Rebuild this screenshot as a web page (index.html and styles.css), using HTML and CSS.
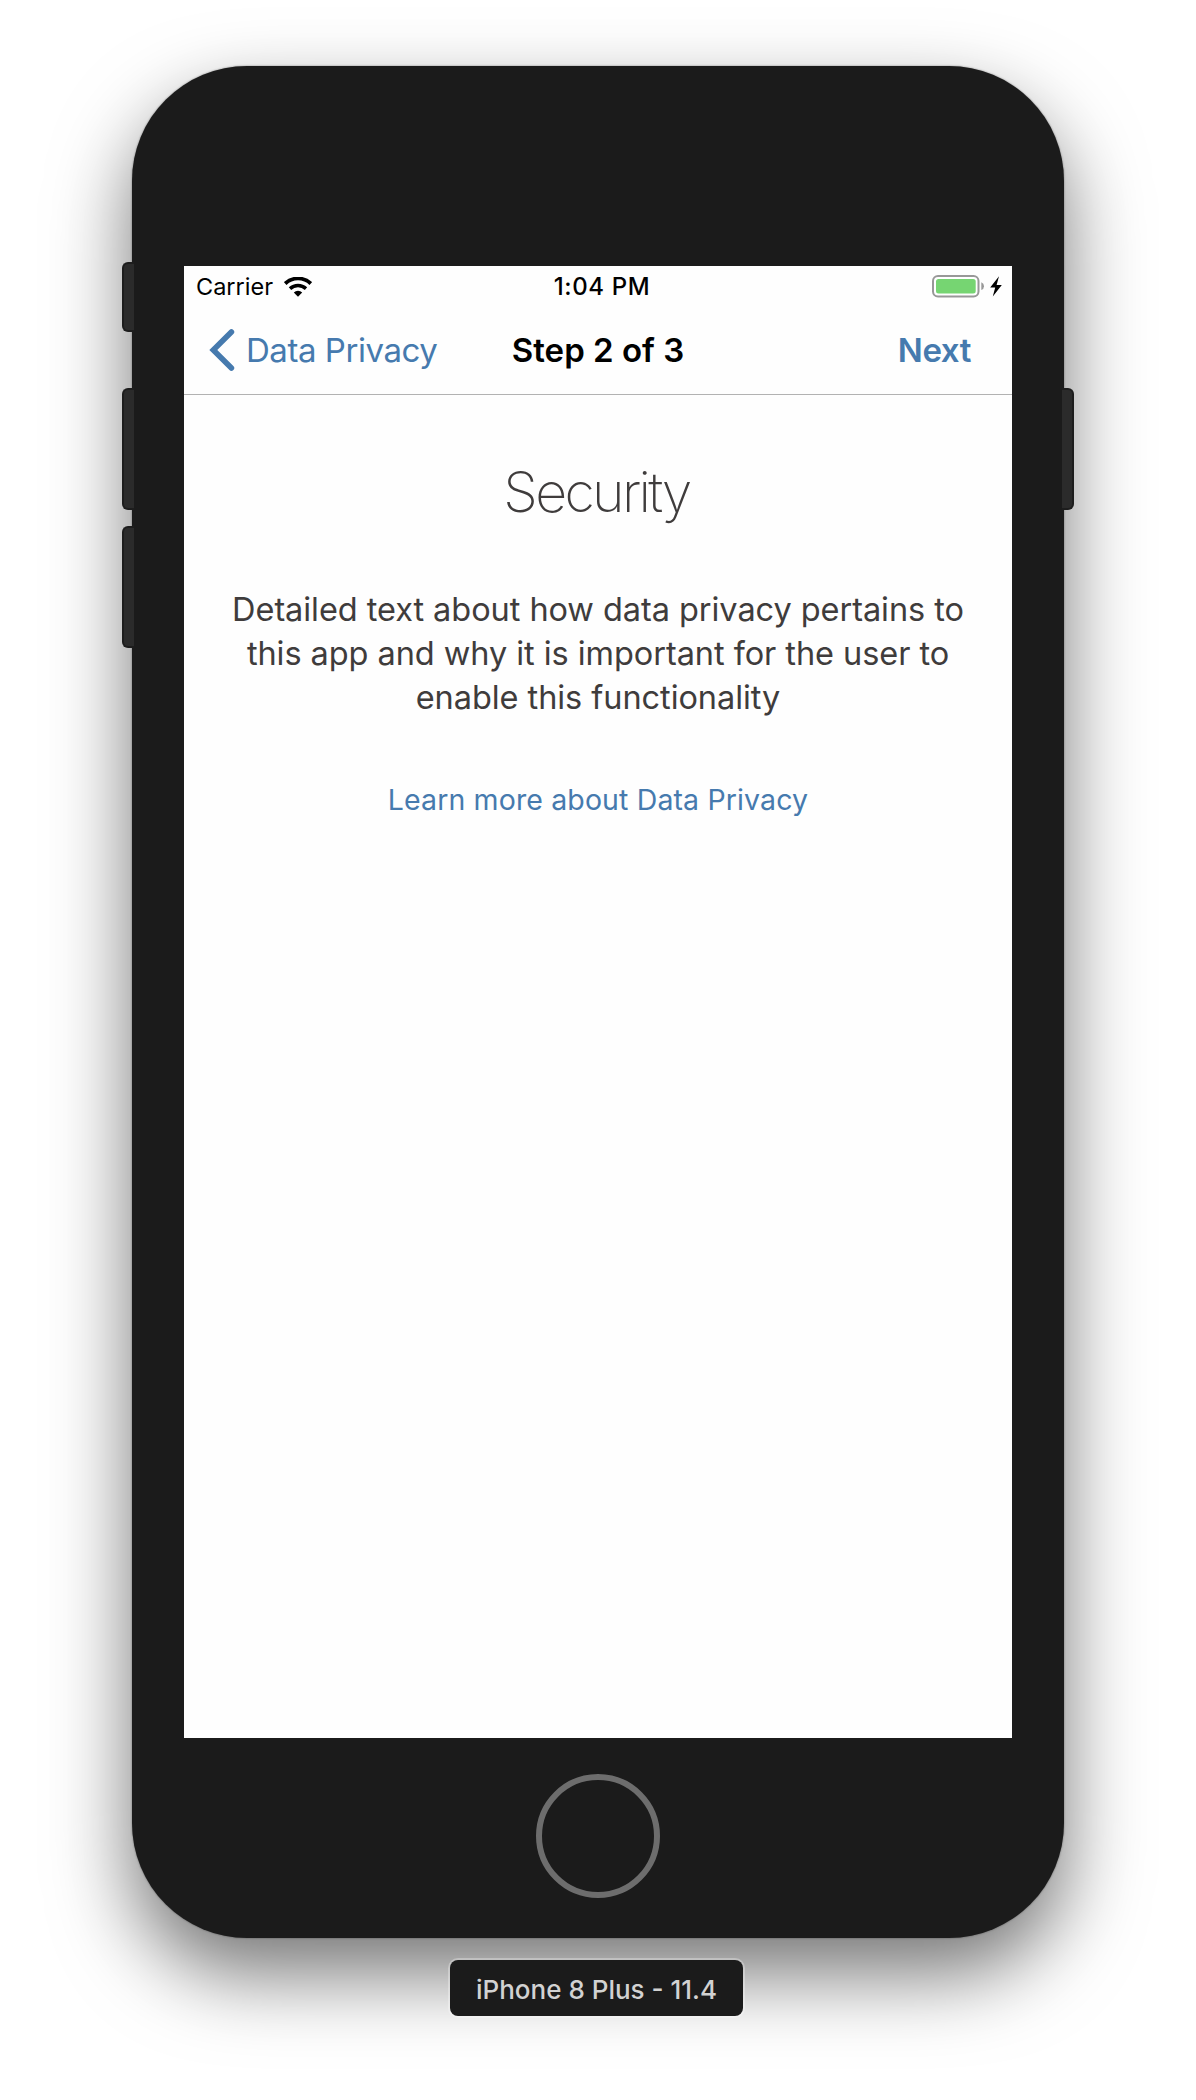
FILE: index.html
```html
<!DOCTYPE html>
<html lang="en">
<head>
<meta charset="utf-8">
<title>Security</title>
<link rel="stylesheet" href="styles.css">
</head>
<body>
<div class="phone">
  <span class="key key-mute"></span>
  <span class="key key-up"></span>
  <span class="key key-down"></span>
  <span class="key key-power"></span>
  <main class="screen">
    <div class="status">
      <div class="status-left"><span class="carrier">Carrier</span><svg class="wifi" width="28" height="20" viewBox="0 0 28 20"><path d="M1.2 6.6A18.5 18.5 0 0 1 26.8 6.6" fill="none" stroke="#000" stroke-width="3.8"/><path d="M6 11.6A11.8 11.8 0 0 1 22 11.6" fill="none" stroke="#000" stroke-width="3.5"/><path d="M9.8 15.4A6 6 0 0 1 18.2 15.4L14 19.8Z"/></svg></div>
      <span class="time">1:04 PM</span>
      <div class="status-right"><svg width="71" height="24" viewBox="0 0 71 24"><rect x="1" y="2" width="45.5" height="20.5" rx="5" fill="#fff" stroke="#989898" stroke-width="2"/><rect x="4" y="5" width="39.7" height="14.6" rx="2.5" fill="#76d572"/><path d="M49.3 8.3Q52 9.5 52 12.2T49.3 16.1Z" fill="#989898"/><path d="M67 2.3L58.2 13.6H63.2L60.8 22.6L69.8 11H64.6Z"/></svg></div>
    </div>
    <nav class="nav">
      <a class="back"><svg width="26" height="44" viewBox="0 0 26 44"><path d="M22.4 4L4.3 22L22.4 40" fill="none" stroke="#467aae" stroke-width="5.6" stroke-linecap="round"/></svg><span class="back-label">Data Privacy</span></a>
      <span class="title">Step 2 of 3</span>
      <a class="next">Next</a>
    </nav>
    <section class="content">
      <h1 class="heading">Security</h1>
      <p class="detail">Detailed text about how data privacy pertains to<br>this app and why it is important for the user to<br>enable this functionality</p>
      <a class="more">Learn more about Data Privacy</a>
    </section>
  </main>
  <span class="home"></span>
</div>
<div class="device-label">iPhone 8 Plus - 11.4</div>
</body>
</html>
```
FILE: styles.css
```css
* { box-sizing: border-box; }
body { margin: 0; height: 2100px; background: #fff; font-family: Inter, "Liberation Sans", sans-serif; color: #000; padding-top: 66px; display: flex; flex-direction: column; align-items: center; overflow: hidden; white-space: nowrap; }
.phone { position: relative; flex: none; width: 932px; height: 1872px; border-radius: 115px; background: #1b1b1b; padding-top: 200px; display: flex; flex-direction: column; align-items: center; box-shadow: 0 36px 80px rgba(0,0,0,.54), 0 0 2px rgba(0,0,0,.45); }
.key { position: absolute; width: 12px; background: #2b2b2b; border: 2px solid #1d1d1d; left: -10px; border-right: 0; border-radius: 6px 0 0 6px; height: 122px; }
.key-mute { top: 196px; height: 70px; }
.key-up { top: 322px; }
.key-down { top: 460px; }
.key-power { top: 322px; left: 930px; border: 2px solid #1d1d1d; border-left: 0; border-radius: 0 6px 6px 0; }
.screen { width: 828px; height: 1472px; background: #fefefe; flex: none; }
.status { height: 40px; padding: 0 9px 0 12px; display: grid; grid-template-columns: 1fr auto 1fr; align-items: center; font-size: 23.5px; line-height: 40px; }
.status-left { display: flex; align-items: center; gap: 11px; }
.carrier { padding-top: 1px; }
.wifi { flex: none; }
.time { font-weight: 500; padding: 0 0 0 5px; font-size: 24px; letter-spacing: .6px; }
.status-right { display: flex; justify-content: flex-end; padding-bottom: 2px; }
.nav { height: 89px; border-bottom: 1.5px solid #b2b2b2; padding: 0 25px; display: grid; grid-template-columns: minmax(0, 1fr) auto minmax(0, 1fr); align-items: center; font-size: 33px; }
.back { display: flex; align-items: center; gap: 11px; color: #467aae; letter-spacing: -.45px; }
.title { font-weight: 600; }
.next { font-weight: 600; color: #467aae; text-align: right; padding-right: 16px; letter-spacing: -.4px; }
.content { display: flex; flex-direction: column; align-items: center; padding-top: 62px; text-align: center; }
.heading { margin: 0; padding-right: 3px; font-size: 55.5px; line-height: 70px; font-weight: 200; color: #3f3c3c; letter-spacing: -2.7px; }
.detail { margin: 61px 0 0; font-size: 32.5px; line-height: 44px; color: #3f3c3c; letter-spacing: -.06px; }
.more { margin-top: 58px; font-size: 28.5px; line-height: 44px; color: #467aae; letter-spacing: .13px; }
.home { width: 124px; height: 124px; margin-top: 36px; border: 6px solid #6d6d6d; border-radius: 50%; }
.device-label { margin: 22px 3px 0 0; width: 293px; height: 56px; border-radius: 8px; background: #1b1b1b; color: #d2d2d2; box-shadow: 0 0 0 2px rgba(255,255,255,.3); font-size: 26px; line-height: 59px; text-align: center; font-weight: 500; position: relative; }
```
